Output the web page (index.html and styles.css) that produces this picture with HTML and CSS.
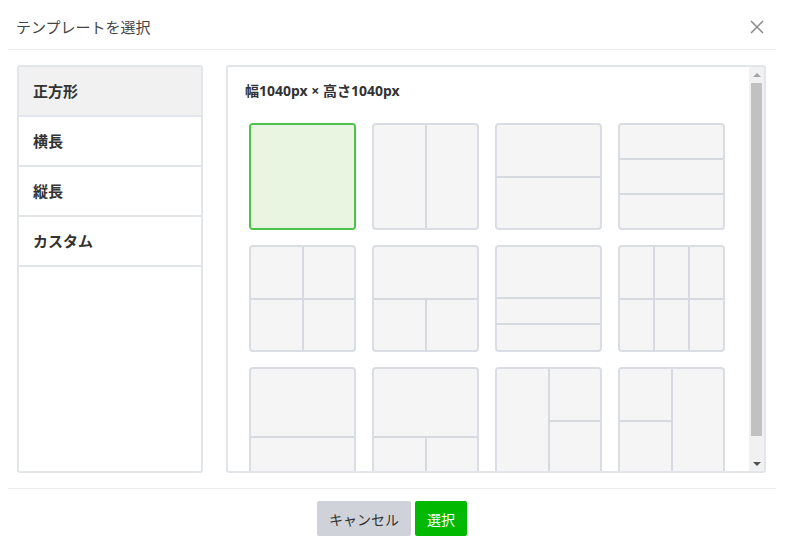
FILE: index.html
```html
<!DOCTYPE html>
<html>
<head>
    <meta charset="utf-8">
    <title>テンプレートを選択</title>
    <link rel="stylesheet" href="styles.css">
</head>
<body>
    <div class="modal">
        <div class="modal-header">
            <h2 class="modal-title">テンプレートを選択</h2>
            <button class="close-btn" aria-label="close">
                <svg width="14" height="14" viewBox="0 0 14 14">
                    <path d="M1 1L13 13M13 1L1 13" stroke="#8a8a8a" stroke-width="1.5" fill="none"/>
                </svg>
            </button>
        </div>

        <div class="modal-body">
            <ul class="type-list">
                <li class="type-item active">正方形</li>
                <li class="type-item">横長</li>
                <li class="type-item">縦長</li>
                <li class="type-item">カスタム</li>
            </ul>

            <div class="template-panel">
                <div class="template-scroll">
                    <h3 class="size-label">幅1040px × 高さ1040px</h3>
                    <div class="template-grid">
                        <div class="tile selected"><span></span></div>
                        <div class="tile cols-2"><span></span><span></span></div>
                        <div class="tile rows-2"><span></span><span></span></div>
                        <div class="tile rows-3"><span></span><span></span><span></span></div>

                        <div class="tile grid-2x2"><span></span><span></span><span></span><span></span></div>
                        <div class="tile top-split"><span class="wide"></span><span></span><span></span></div>
                        <div class="tile half-quarters"><span></span><span></span><span></span></div>
                        <div class="tile grid-3x2"><span></span><span></span><span></span><span></span><span></span><span></span></div>

                        <div class="tile big-top"><span></span><span></span></div>
                        <div class="tile big-top-split"><span class="wide"></span><span></span><span></span></div>
                        <div class="tile left-tall"><span class="tall"></span><span></span><span></span></div>
                        <div class="tile right-tall"><span></span><span class="tall"></span><span></span></div>
                    </div>
                </div>

                <!-- scrollbar drawn by hand, the screenshot browser hides native ones -->
                <div class="scrollbar">
                    <div class="scroll-btn up"></div>
                    <div class="scroll-track"><div class="scroll-thumb"></div></div>
                    <div class="scroll-btn down"></div>
                </div>
            </div>
        </div>

        <div class="modal-footer">
            <button class="button button-cancel">キャンセル</button>
            <button class="button button-primary">選択</button>
        </div>
    </div>
</body>
</html>
```

FILE: styles.css
```css
* {
    box-sizing: border-box;
}

body {
    font-family: "Noto Sans", "Noto Sans CJK JP", sans-serif;
    margin: 0;
    background: white;
    color: #333;
}

.modal {
    width: 784px;
    padding: 0 8px;
}

.modal-header {
    height: 50px;
    display: flex;
    align-items: center;
    justify-content: space-between;
    padding: 0 12px 0 8px;
    border-bottom: 1px solid #ececec;
}

.modal-title {
    margin: 0;
    font-size: 15px;
    font-weight: normal;
    color: #444;
    padding-top: 3px;
}

.close-btn {
    background: none;
    border: none;
    padding: 0;
    cursor: pointer;
    display: flex;
    margin-top: 5px;
}

.modal-body {
    display: flex;
    gap: 23px;
    padding: 15px 10px 15px 9px;
    border-bottom: 1px solid #ececec;
}

.type-list {
    list-style: none;
    margin: 0;
    padding: 0;
    width: 186px;
    height: 408px;
    border: 2px solid #e2e5e9;
    border-radius: 3px;
}

.type-item {
    height: 50px;
    line-height: 48px;
    padding-left: 14px;
    font-size: 15px;
    font-weight: bold;
    color: #333;
    border-bottom: 2px solid #e2e5e9;
    cursor: pointer;
}

.type-item.active {
    background: #f1f1f1;
}

.template-panel {
    flex: 1;
    height: 408px;
    border: 2px solid #e2e5e9;
    border-radius: 3px;
    display: flex;
}

.template-scroll {
    flex: 1;
    overflow: hidden;
    padding-left: 21px;
}

.size-label {
    margin: 13px 0 0 -4px;
    font-size: 14px;
    font-weight: bold;
    color: #333;
    height: 22px;
    line-height: 22px;
}

.template-grid {
    display: grid;
    grid-template-columns: repeat(4, 107px);
    column-gap: 16px;
    row-gap: 15px;
    margin-top: 21px;
}

.tile {
    height: 107px;
    border: 2px solid #dadde2;
    border-radius: 4px;
    overflow: hidden;
    background: #d6d9de;
    display: grid;
    gap: 2px;
    cursor: pointer;
}

.tile span {
    background: #f5f5f5;
}

.tile.selected {
    border-color: #4cc24c;
}

.tile.selected span {
    background: #eaf5e1;
}

.cols-2 { grid-template-columns: 1fr 1fr; }
.rows-2 { grid-template-rows: 1fr 1fr; }
.rows-3 { grid-template-rows: 1fr 1fr 1fr; }
.grid-2x2 { grid-template-columns: 1fr 1fr; grid-template-rows: 1fr 1fr; }
.top-split { grid-template-columns: 1fr 1fr; grid-template-rows: 1fr 1fr; }
.half-quarters { grid-template-rows: 2fr 1fr 1fr; }
.grid-3x2 { grid-template-columns: 1fr 1fr 1fr; grid-template-rows: 1fr 1fr; }
.big-top { grid-template-rows: 2fr 1fr; }
.big-top-split { grid-template-columns: 1fr 1fr; grid-template-rows: 2fr 1fr; }
.left-tall { grid-template-columns: 1fr 1fr; grid-template-rows: 1fr 1fr; }
.right-tall { grid-template-columns: 1fr 1fr; grid-template-rows: 1fr 1fr; }

.tile .wide { grid-column: 1 / 3; }
.tile .tall { grid-row: 1 / 3; }
.right-tall .tall { grid-column: 2; }

.scrollbar {
    width: 15px;
    background: #f1f1f1;
    display: flex;
    flex-direction: column;
}

.scroll-btn {
    height: 15px;
    display: flex;
    align-items: center;
    justify-content: center;
}

.scroll-btn::before {
    content: "";
    border-left: 4px solid transparent;
    border-right: 4px solid transparent;
}

.scroll-btn.up::before {
    border-bottom: 4px solid #a3a3a3;
}

.scroll-btn.down::before {
    border-top: 4px solid #505050;
}

.scroll-track {
    flex: 1;
    padding: 1px 2px 0;
}

.scroll-thumb {
    height: 353px;
    background: #c1c1c1;
}

.modal-footer {
    display: flex;
    justify-content: center;
    gap: 4px;
    padding: 12px 0;
}

.button {
    height: 35px;
    border: none;
    border-radius: 2px;
    padding: 0 12px;
    font-family: "Noto Sans", "Noto Sans CJK JP", sans-serif;
    font-size: 14px;
    cursor: pointer;
}

.button-cancel {
    background: #cfd3d9;
    color: #333;
}

.button-primary {
    background: #00b900;
    color: white;
}
```
